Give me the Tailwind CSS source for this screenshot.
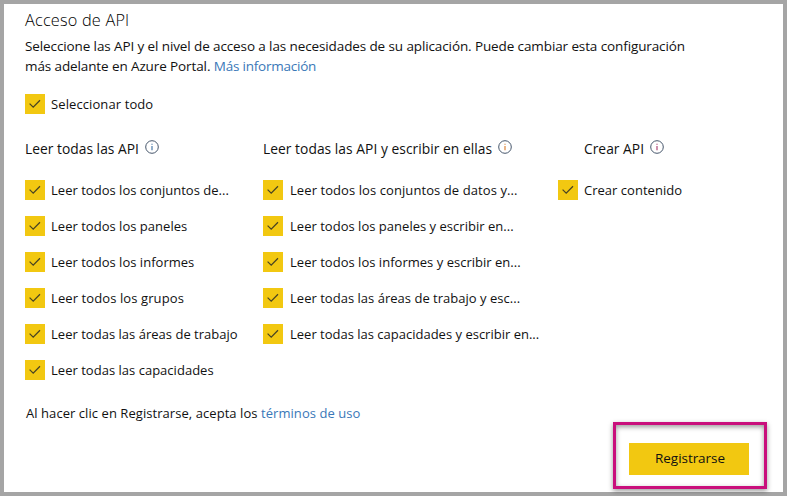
<!DOCTYPE html>
<html lang="es">
<head>
<meta charset="utf-8">
<title>Acceso de API</title>
<script src="https://cdn.jsdelivr.net/npm/@tailwindcss/browser@4"></script>
</head>
<body class="font-['Open_Sans','Noto_Sans',sans-serif] text-[13px] tracking-[0.02px] text-[#111] bg-white">
<svg class="hidden">
  <symbol id="check" viewBox="0 0 20 20"><path d="M4.6 9.6 8.2 13.1 15 6.2" fill="none" stroke="#484423" stroke-width="1.25"/></symbol>
  <symbol id="info" viewBox="0 0 14 14"><circle cx="7" cy="7" r="6.3" fill="none" stroke="#46566b" stroke-width="1"/><path d="M7 5.9V10.3M7 3.7V4.8" stroke="currentColor" stroke-width="1.1"/></symbol>
</svg>
<main class="w-[787px] h-[496px] border-4 border-[#a5a5a5] pl-[21px] flex flex-col overflow-hidden">
  <h1 class="h-5 mt-1.5 leading-5 text-[16.3px] tracking-[0.2px] font-light text-black whitespace-nowrap"><span>Acceso de API</span></h1>
  <p class="mt-1.5 leading-5 text-[13.5px] whitespace-nowrap tracking-[-0.11px]"><span>Seleccione las API y el nivel de acceso a las necesidades de su aplicación. Puede cambiar esta configuración</span><br><span>más adelante en Azure Portal. </span><a class="text-[#3a78b8] tracking-[-0.22px]">Más información</a></p>
  <label class="mt-[18px] h-5 flex items-center gap-1.5"><svg class="size-5 bg-[#f2c811]"><use href="#check"/></svg><span class="pt-0.5 tracking-[0.1px]">Seleccionar todo</span></label>
  <div class="mt-[25px] flex whitespace-nowrap leading-5">
    <section class="w-[238px] flex flex-col gap-4">
      <h2 class="h-[25px] flex gap-1.5 text-[13.8px]"><span>Leer todas las API</span><svg class="size-3.5 mt-[0.5px] text-[#3b6ea0]"><use href="#info"/></svg></h2>
      <label class="h-5 flex items-center gap-1.5"><svg class="size-5 bg-[#f2c811]"><use href="#check"/></svg><span>Leer todos los conjuntos de...</span></label>
      <label class="h-5 flex items-center gap-1.5"><svg class="size-5 bg-[#f2c811]"><use href="#check"/></svg><span>Leer todos los paneles</span></label>
      <label class="h-5 flex items-center gap-1.5"><svg class="size-5 bg-[#f2c811]"><use href="#check"/></svg><span>Leer todos los informes</span></label>
      <label class="h-5 flex items-center gap-1.5"><svg class="size-5 bg-[#f2c811]"><use href="#check"/></svg><span class="tracking-[0.1px]">Leer todos los grupos</span></label>
      <label class="h-5 flex items-center gap-1.5"><svg class="size-5 bg-[#f2c811]"><use href="#check"/></svg><span>Leer todas las áreas de trabajo</span></label>
      <label class="h-5 flex items-center gap-1.5"><svg class="size-5 bg-[#f2c811]"><use href="#check"/></svg><span>Leer todas las capacidades</span></label>
    </section>
    <section class="w-[295px] flex flex-col gap-4">
      <h2 class="h-[25px] flex gap-1.5 text-[13.8px]"><span class="tracking-[0.04px]">Leer todas las API y escribir en ellas</span><svg class="size-3.5 mt-[0.5px] text-[#d97a28]"><use href="#info"/></svg></h2>
      <label class="h-5 flex items-center gap-[7px]"><svg class="size-5 bg-[#f2c811]"><use href="#check"/></svg><span class="tracking-[0.08px]">Leer todos los conjuntos de datos y...</span></label>
      <label class="h-5 flex items-center gap-[7px]"><svg class="size-5 bg-[#f2c811]"><use href="#check"/></svg><span>Leer todos los paneles y escribir en...</span></label>
      <label class="h-5 flex items-center gap-[7px]"><svg class="size-5 bg-[#f2c811]"><use href="#check"/></svg><span>Leer todos los informes y escribir en...</span></label>
      <label class="h-5 flex items-center gap-[7px]"><svg class="size-5 bg-[#f2c811]"><use href="#check"/></svg><span>Leer todas las áreas de trabajo y esc...</span></label>
      <label class="h-5 flex items-center gap-[7px]"><svg class="size-5 bg-[#f2c811]"><use href="#check"/></svg><span class="tracking-normal">Leer todas las capacidades y escribir en...</span></label>
    </section>
    <section class="flex flex-col gap-4">
      <h2 class="h-[25px] pl-[26px] flex gap-1.5 text-[13.8px]"><span>Crear API</span><svg class="size-3.5 mt-[0.5px] text-[#a8356c]"><use href="#info"/></svg></h2>
      <label class="h-5 flex items-center gap-1.5"><svg class="size-5 bg-[#f2c811]"><use href="#check"/></svg><span>Crear contenido</span></label>
    </section>
  </div>
  <p class="mt-[23px] pl-px leading-5 whitespace-nowrap tracking-[0.06px]"><span>Al hacer clic en Registrarse, acepta los </span><a class="text-[#3a78b8]">términos de uso</a></p>
</main>
<div class="absolute left-[613px] top-[422px] w-[154px] h-[67px] border-3 border-[#c90f7c] pl-[13px] pt-[18px] shadow-[0_2px_5px_rgba(0,0,0,0.4),inset_0_2px_5px_rgba(0,0,0,0.4)]">
  <button class="block w-[120px] h-8 pl-0.5 pb-0.5 bg-[#f2c811] text-[13.5px] tracking-[-0.05px]"><span>Registrarse</span></button>
</div>
</body>
</html>
